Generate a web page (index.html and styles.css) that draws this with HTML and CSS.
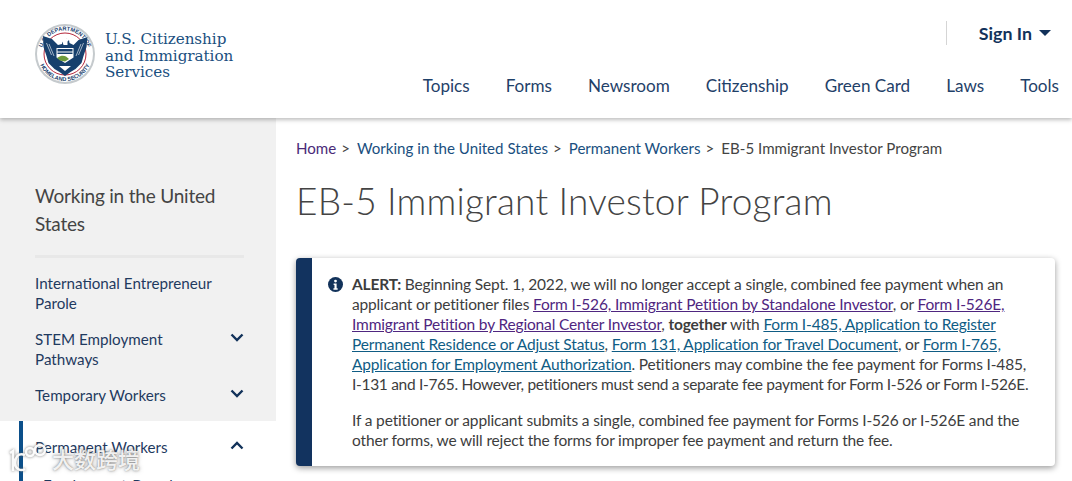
FILE: index.html
```html
<!DOCTYPE html>
<html lang="en">
<head>
<meta charset="utf-8">
<title>EB-5 Immigrant Investor Program | USCIS</title>
<link rel="stylesheet" href="styles.css">
</head>
<body>
<header class="site-header">
  <a class="brand" href="#">
    <svg class="seal" viewBox="0 0 60 60" width="60" height="60" aria-hidden="true">
      <defs>
        <path id="arcTop" d="M6.500 30a23.500 23.500 0 0 1 47 0"/>
        <path id="arcBottom" d="M3 30a27 27 0 0 0 54 0"/>
      </defs>
      <circle cx="30" cy="30" r="30" fill="#c5cacd"/>
      <circle cx="30" cy="30" r="28" fill="#fff"/>
      <circle cx="30" cy="30" r="21" fill="#fff" stroke="#b5283c" stroke-width="1"/>
      <text class="seal-text"><textPath href="#arcTop" startOffset="50%" text-anchor="middle">U.S. DEPARTMENT OF</textPath></text>
      <text class="seal-text"><textPath href="#arcBottom" startOffset="50%" text-anchor="middle">HOMELAND SECURITY</textPath></text>
      <path d="M8 12l9 3 6 6 4-1 .5-4 3-2 3.500 2 .5 3 4 2 5-5 9-3-1 10-3 9-2 7-6 6-5 3-5.500 4-5.500-4-5-3-6-6-2-7-3-9z" fill="#17406d"/>
      <path d="M25 16.500l5-3 4.500 2-2 2v3.500h-4l-1-3z" fill="#fff"/>
      <path d="M21.500 24h17v9.500l-8.500 5.500-8.500-5.500z" fill="#fff"/>
      <path d="M22.500 25h15v2.500h-15zM22.500 28.500h15v1.500h-15z" fill="#17406d"/>
      <path d="M22 34c4-3 7-2.500 9-1.500l3 2.500-4 2.500-5-1z" fill="#6d9a3c"/>
      <path d="M24 42h12l-6 5z" fill="#fff"/>
      <path d="M14 20l5 12M46 20l-5 12M11.500 19l5 12M48.500 19l-5 12" stroke="#fff" stroke-width=".6"/>
    </svg>
    <span class="agency">U.S. Citizenship<br>and Immigration<br>Services</span>
  </a>
  <div class="header-right">
    <div class="signin-row">
      <a class="signin" href="#">Sign In<span class="caret"></span></a>
    </div>
    <nav class="main-nav">
      <a href="#">Topics</a>
      <a href="#">Forms</a>
      <a href="#">Newsroom</a>
      <a href="#">Citizenship</a>
      <a href="#">Green Card</a>
      <a href="#">Laws</a>
      <a href="#">Tools</a>
    </nav>
  </div>
</header>

<div class="page">
  <aside class="sidebar">
    <div class="side-gray">
      <h2 class="side-title">Working in the United States</h2>
      <ul class="side-list">
        <li class="side-item"><a href="#">International Entrepreneur Parole</a></li>
        <li class="side-item"><a href="#">STEM Employment Pathways</a>
          <svg class="chev" viewBox="0 0 14 9" width="14" height="9" aria-hidden="true"><path d="M1.500 1.500L7 7l5.500-5.500"/></svg></li>
        <li class="side-item"><a href="#">Temporary Workers</a>
          <svg class="chev" viewBox="0 0 14 9" width="14" height="9" aria-hidden="true"><path d="M1.500 1.500L7 7l5.500-5.500"/></svg></li>
      </ul>
    </div>
    <div class="side-active">
      <div class="side-item active"><a href="#">Permanent Workers</a>
        <svg class="chev" viewBox="0 0 14 9" width="14" height="9" aria-hidden="true"><path d="M1.500 7.500L7 2l5.500 5.500"/></svg></div>
      <div class="side-sub"><a href="#">Employment-Based</a></div>
    </div>
  </aside>

  <main class="content">
    <nav class="crumbs">
      <a href="#">Home</a><span class="sep">&gt;</span>
      <a href="#">Working in the United States</a><span class="sep">&gt;</span>
      <a href="#">Permanent Workers</a><span class="sep">&gt;</span>
      <span>EB-5 Immigrant Investor Program</span>
    </nav>
    <h1 class="page-title">EB-5 Immigrant Investor Program</h1>
    <section class="alert">
      <svg class="info" viewBox="0 0 16 16" width="15" height="15" aria-hidden="true">
        <circle cx="8" cy="8" r="8" fill="#12325a"/>
        <circle cx="8" cy="4.300" r="1.500" fill="#fff"/>
        <path d="M6 7h3.200v5H10.300v1.500H5.800V12h1.100V8.500H6z" fill="#fff"/>
      </svg>
      <div class="alert-body">
        <p><strong>ALERT:</strong> Beginning Sept. 1, 2022, we will no longer accept a single, combined fee payment when an<br>
        applicant or petitioner files <a class="visited" href="#">Form I-526, Immigrant Petition by Standalone Investor</a>, or <a class="visited" href="#">Form I-526E,<br>
        Immigrant Petition by Regional Center Investor</a>, <strong>together</strong> with <a href="#">Form I-485, Application to Register<br>
        Permanent Residence or Adjust Status</a>, <a href="#">Form 131, Application for Travel Document</a>, or <a href="#">Form I-765,<br>
        Application for Employment Authorization</a>. Petitioners may combine the fee payment for Forms I-485,<br>
        <span class="tight">I-131 and I-765. However, petitioners must send a separate fee payment for Form I-526 or Form I-526E.</span></p>
        <p>If a petitioner or applicant submits a single, combined fee payment for Forms I-526 or I-526E and the<br>
        other forms, we will reject the forms for improper fee payment and return the fee.</p>
      </div>
    </section>
  </main>
</div>

<div class="watermark">
  <svg class="wm-logo" viewBox="0 0 40 30" width="40" height="30" aria-hidden="true">
    <path d="M2 10l3-2v20M17 12c-7-3-10 3-10 8s5 9 10 6"/>
    <circle cx="22" cy="9" r="4"/>
    <circle cx="32" cy="7" r="5"/>
  </svg>
  <span>大数跨境</span>
</div>
</body>
</html>
```

FILE: styles.css
```css
* { box-sizing: border-box; }
html, body { margin: 0; height: 481px; overflow: hidden; }
body {
  font-family: "Lato", "Noto Sans", sans-serif;
  font-size: 16px;
  color: #333;
  background: #fff;
  position: relative;
}
a { text-decoration: none; color: inherit; }

.site-header {
  height: 118px;
  display: flex;
  justify-content: space-between;
  padding: 0 13px 0 35px;
  background: #fff;
  box-shadow: 0 2px 4px rgba(0,0,0,.25);
  position: relative;
  z-index: 2;
}
.brand { display: flex; align-items: flex-start; gap: 10px; padding-top: 24px; }
.seal { display: block; }
.seal-text { font-family: "Liberation Sans", sans-serif; font-size: 5.600px; font-weight: 700; fill: #17406d; }
.agency {
  font-family: "DejaVu Serif", "Liberation Serif", serif;
  font-size: 15.200px;
  line-height: 16.500px;
  color: #1a4f80;
  letter-spacing: -.05px;
  padding-top: 7px;
}
.header-right { display: flex; flex-direction: column; align-items: flex-end; }
.signin-row {
  margin-top: 21px;
  height: 24px;
  display: flex;
  align-items: center;
  padding-left: 32px;
  border-left: 1px solid #d5d5d5;
  margin-right: 8px;
}
.signin { font-weight: 700; font-size: 17.800px; color: #12325a; display: flex; align-items: center; }
.caret {
  margin-left: 7px;
  border-left: 6px solid transparent;
  border-right: 6px solid transparent;
  border-top: 6px solid #12325a;
}
.main-nav { display: flex; gap: 36px; margin-top: 30px; font-size: 17.100px; color: #1f4169; }

.page { display: flex; height: 363px; }
.sidebar { width: 276px; flex: none; display: flex; flex-direction: column; }
.side-gray { background: #f1f1f1; height: 303px; padding: 64px 32px 0 35px; }
.side-title {
  margin: 0;
  font-weight: 400;
  font-size: 19px;
  line-height: 28px;
  letter-spacing: -.2px;
  color: #444;
  padding-bottom: 17px;
  border-bottom: 3px solid #e8e8e8;
}
.side-list { list-style: none; margin: 15px 0 0; padding: 0; }
.side-item {
  display: flex;
  justify-content: space-between;
  align-items: flex-start;
  font-size: 15.200px;
  line-height: 20px;
  color: #1f3a5f;
  margin-bottom: 16px;
}
.side-item a { width: 185px; }
.chev { flex: none; fill: none; stroke: #12325a; stroke-width: 2.400; margin-top: 4px; }
.side-active {
  flex: 1;
  margin-left: 19px;
  border-left: 4px solid #0b4f8a;
  padding: 16px 32px 0 12px;
  overflow: hidden;
}
.side-active .side-item { margin-bottom: 18px; }
.side-sub { font-size: 15.200px; line-height: 20px; color: #1f3a5f; padding-left: 8px; }

.content { flex: 1; padding: 20px 17px 0 20px; min-width: 0; }
.crumbs { font-size: 15.100px; line-height: 20px; color: #444; display: flex; white-space: nowrap; }
.crumbs a { color: #1a4f80; }
.crumbs a:first-child { color: #4a2a78; }
.sep { margin: 0 7px 0 5px; }
.page-title {
  margin: 20px 0 0;
  font-weight: 300;
  font-size: 37px;
  line-height: 46px;
  color: #444;
  letter-spacing: .2px;
}
.alert {
  margin-top: 34px;
  height: 208px;
  display: flex;
  background: #fff;
  border-left: 16px solid #12335f;
  border-radius: 4px;
  padding: 16px 20px 0 16px;
  box-shadow: 0 2px 6px rgba(0,0,0,.4);
}
.info { flex: none; margin: 3px 9px 0 0; }
.alert-body { font-size: 15.500px; line-height: 20px; letter-spacing: -.155px; color: #3d3d3d; white-space: nowrap; }
.alert-body p { margin: 0 0 16px; }
.alert-body strong { font-weight: 700; }
.alert-body a { color: #0f5c84; text-decoration: underline; }
.alert-body a.visited { color: #4f2680; }
.alert-body .tight { letter-spacing: -.31px; }

.watermark {
  position: absolute;
  left: 8px;
  top: 443px;
  width: 134px;
  display: flex;
  align-items: flex-end;
  gap: 4px;
  font-family: "Noto Sans CJK SC", sans-serif;
  font-size: 22px;
  line-height: 30px;
  font-weight: 500;
  color: rgba(255,255,255,.9);
  text-shadow: 0 0 2px rgba(90,90,90,.7), 0 0 4px rgba(90,90,90,.5);
  z-index: 3;
  pointer-events: none;
}
.wm-logo {
  flex: none;
  fill: none;
  stroke: rgba(255,255,255,.95);
  stroke-width: 2.500;
  filter: drop-shadow(0 0 1.500px rgba(90,90,90,.8));
}
```
